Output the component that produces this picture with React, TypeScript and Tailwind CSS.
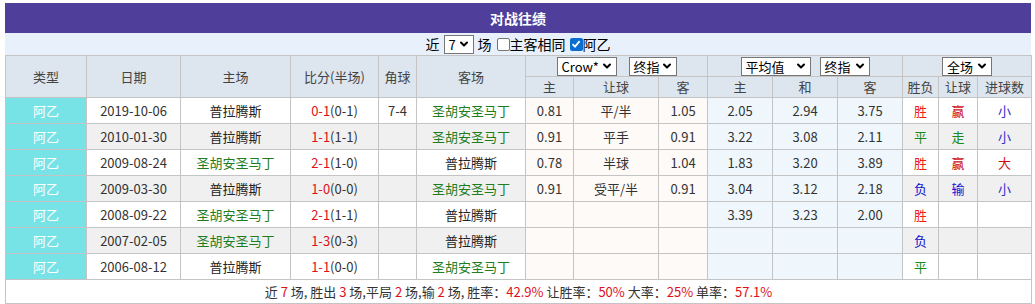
import { ChevronDown } from "lucide-react";

type Row = {
  date: string;
  home: string;
  homeGreen: boolean;
  score: string;
  half: string;
  corner: string;
  away: string;
  odds: [string, string, string];
  avg: [string, string, string];
  result: string;
  handicap: string;
  goals: string;
};

const SAN = "圣胡安圣马丁";
const PLA = "普拉腾斯";

const rows: Row[] = [
  { date: "2019-10-06", home: PLA, homeGreen: false, score: "0-1", half: "(0-1)", corner: "7-4", away: SAN, odds: ["0.81", "平/半", "1.05"], avg: ["2.05", "2.94", "3.75"], result: "胜", handicap: "赢", goals: "小" },
  { date: "2010-01-30", home: PLA, homeGreen: false, score: "1-1", half: "(1-1)", corner: "", away: SAN, odds: ["0.91", "平手", "0.91"], avg: ["3.22", "3.08", "2.11"], result: "平", handicap: "走", goals: "小" },
  { date: "2009-08-24", home: SAN, homeGreen: true, score: "2-1", half: "(1-0)", corner: "", away: PLA, odds: ["0.78", "半球", "1.04"], avg: ["1.83", "3.20", "3.89"], result: "胜", handicap: "赢", goals: "大" },
  { date: "2009-03-30", home: PLA, homeGreen: false, score: "1-0", half: "(0-0)", corner: "", away: SAN, odds: ["0.91", "受平/半", "0.91"], avg: ["3.04", "3.12", "2.18"], result: "负", handicap: "输", goals: "小" },
  { date: "2008-09-22", home: SAN, homeGreen: true, score: "2-1", half: "(1-1)", corner: "", away: PLA, odds: ["", "", ""], avg: ["3.39", "3.23", "2.00"], result: "胜", handicap: "", goals: "" },
  { date: "2007-02-05", home: SAN, homeGreen: true, score: "1-3", half: "(0-3)", corner: "", away: PLA, odds: ["", "", ""], avg: ["", "", ""], result: "负", handicap: "", goals: "" },
  { date: "2006-08-12", home: PLA, homeGreen: false, score: "1-1", half: "(0-0)", corner: "", away: SAN, odds: ["", "", ""], avg: ["", "", ""], result: "平", handicap: "", goals: "" },
];

const colors: Record<string, string> = {
  胜: "text-[#f0200f]",
  平: "text-[#1a8a1a]",
  负: "text-[#1010d0]",
  赢: "text-[#d01010]",
  走: "text-[#1a8a1a]",
  输: "text-[#1010d0]",
  小: "text-[#3030c8]",
  大: "text-[#d01010]",
};

function FakeSelect({ label, width }: { label: string; width: string }) {
  return (
    <span
      className={`inline-flex h-[19px] items-center justify-between border border-[#767676] bg-white pl-[4px] pr-[3px] align-middle text-[13px] leading-none text-black ${width}`}
    >
      <span>{label}</span>
      <ChevronDown size={12} strokeWidth={4} />
    </span>
  );
}

const cell = "border border-[#c4c4c4] text-center";

export default function App() {
  return (
    <div
      className="pl-[5px] pt-[3px] text-[13px] text-[#333]"
      style={{ fontFamily: '"Noto Sans CJK SC", "Noto Sans", sans-serif' }}
    >
      <div className="w-[1026px]">
        <div className="flex h-[30px] items-center justify-center bg-[#4f3f9a] text-[14px] font-bold text-white">
          对战往绩
        </div>
        <div className="flex h-[22px] items-center justify-center gap-[4px] bg-[#e8f1fb] text-[14px] text-black">
          <span>近</span>
          <FakeSelect label="7" width="w-[30px]" />
          <span>场</span>
          <span className="ml-[1px] inline-block h-[13px] w-[13px] rounded-[2px] border border-[#767676] bg-white" />
          <span className="-ml-[4px]">主客相同</span>
          <span className="inline-flex h-[13px] w-[13px] items-center justify-center rounded-[2px] bg-[#0a6ed1]">
            <svg width="10" height="10" viewBox="0 0 10 10">
              <path d="M1.5 5.2 L4 7.6 L8.6 2.2" fill="none" stroke="white" strokeWidth="1.8" />
            </svg>
          </span>
          <span className="-ml-[4px]">阿乙</span>
        </div>
        <table className="w-full table-fixed border-collapse">
          <colgroup>
            <col className="w-[81px]" />
            <col className="w-[94px]" />
            <col className="w-[110px]" />
            <col className="w-[88px]" />
            <col className="w-[38px]" />
            <col className="w-[109px]" />
            <col className="w-[48px]" />
            <col className="w-[85px]" />
            <col className="w-[49px]" />
            <col className="w-[65px]" />
            <col className="w-[65px]" />
            <col className="w-[65px]" />
            <col className="w-[36px]" />
            <col className="w-[39px]" />
            <col className="w-[54px]" />
          </colgroup>
          <thead className="bg-[#dde5ee] text-[#444]">
            <tr className="h-[21px]">
              <th rowSpan={2} className={`${cell} font-normal`}>类型</th>
              <th rowSpan={2} className={`${cell} font-normal`}>日期</th>
              <th rowSpan={2} className={`${cell} font-normal`}>主场</th>
              <th rowSpan={2} className={`${cell} font-normal`}>比分(半场)</th>
              <th rowSpan={2} className={`${cell} font-normal`}>角球</th>
              <th rowSpan={2} className={`${cell} font-normal`}>客场</th>
              <th colSpan={3} className={`${cell} font-normal`}>
                <div className="flex items-center justify-center gap-[12px]">
                  <FakeSelect label="Crow*" width="w-[60px]" />
                  <FakeSelect label="终指" width="w-[48px]" />
                </div>
              </th>
              <th colSpan={3} className={`${cell} font-normal`}>
                <div className="flex items-center justify-center gap-[9px]">
                  <FakeSelect label="平均值" width="w-[70px]" />
                  <FakeSelect label="终指" width="w-[50px]" />
                </div>
              </th>
              <th colSpan={3} className={`${cell} font-normal`}>
                <div className="flex items-center justify-center">
                  <FakeSelect label="全场" width="w-[50px]" />
                </div>
              </th>
            </tr>
            <tr className="h-[21px]">
              {["主", "让球", "客", "主", "和", "客", "胜负", "让球", "进球数"].map((h, i) => (
                <th key={i} className={`${cell} font-normal`}>{h}</th>
              ))}
            </tr>
          </thead>
          <tbody>
            {rows.map((r, i) => {
              const alt = i % 2 === 1;
              const base = alt ? "bg-[#f0f0f0]" : "bg-white";
              return (
                <tr key={r.date} className={`h-[26px] ${base}`}>
                  <td className={`${cell} bg-[#77e3e6] text-white`}>阿乙</td>
                  <td className={cell}>{r.date}</td>
                  <td className={`${cell} ${r.homeGreen ? "text-[#1e7d1e]" : "text-[#222]"}`}>{r.home}</td>
                  <td className={cell}>
                    <span className="text-[#e0101a]">{r.score}</span>
                    {r.half}
                  </td>
                  <td className={cell}>{r.corner}</td>
                  <td className={`${cell} ${r.homeGreen ? "text-[#222]" : "text-[#1e7d1e]"}`}>{r.away}</td>
                  {r.odds.map((o, j) => (
                    <td key={j} className={`${cell} bg-[#fdfaf8]`}>{o}</td>
                  ))}
                  {r.avg.map((o, j) => (
                    <td key={j} className={`${cell} bg-[#eff7fc]`}>{o}</td>
                  ))}
                  <td className={`${cell} ${colors[r.result] ?? ""}`}>{r.result}</td>
                  <td className={`${cell} ${colors[r.handicap] ?? ""}`}>{r.handicap}</td>
                  <td className={`${cell} ${colors[r.goals] ?? ""}`}>{r.goals}</td>
                </tr>
              );
            })}
            <tr className="h-[24px] bg-white">
              <td colSpan={15} className={cell}>
                近 <span className="text-[#e0101a]">7</span> 场, 胜出{" "}
                <span className="text-[#e0101a]">3</span> 场,平局{" "}
                <span className="text-[#e0101a]">2</span> 场,输{" "}
                <span className="text-[#e0101a]">2</span> 场, 胜率：
                <span className="text-[#e0101a]">42.9%</span> 让胜率：
                <span className="text-[#e0101a]">50%</span> 大率：
                <span className="text-[#e0101a]">25%</span> 单率：
                <span className="text-[#e0101a]">57.1%</span>
              </td>
            </tr>
          </tbody>
        </table>
      </div>
    </div>
  );
}
